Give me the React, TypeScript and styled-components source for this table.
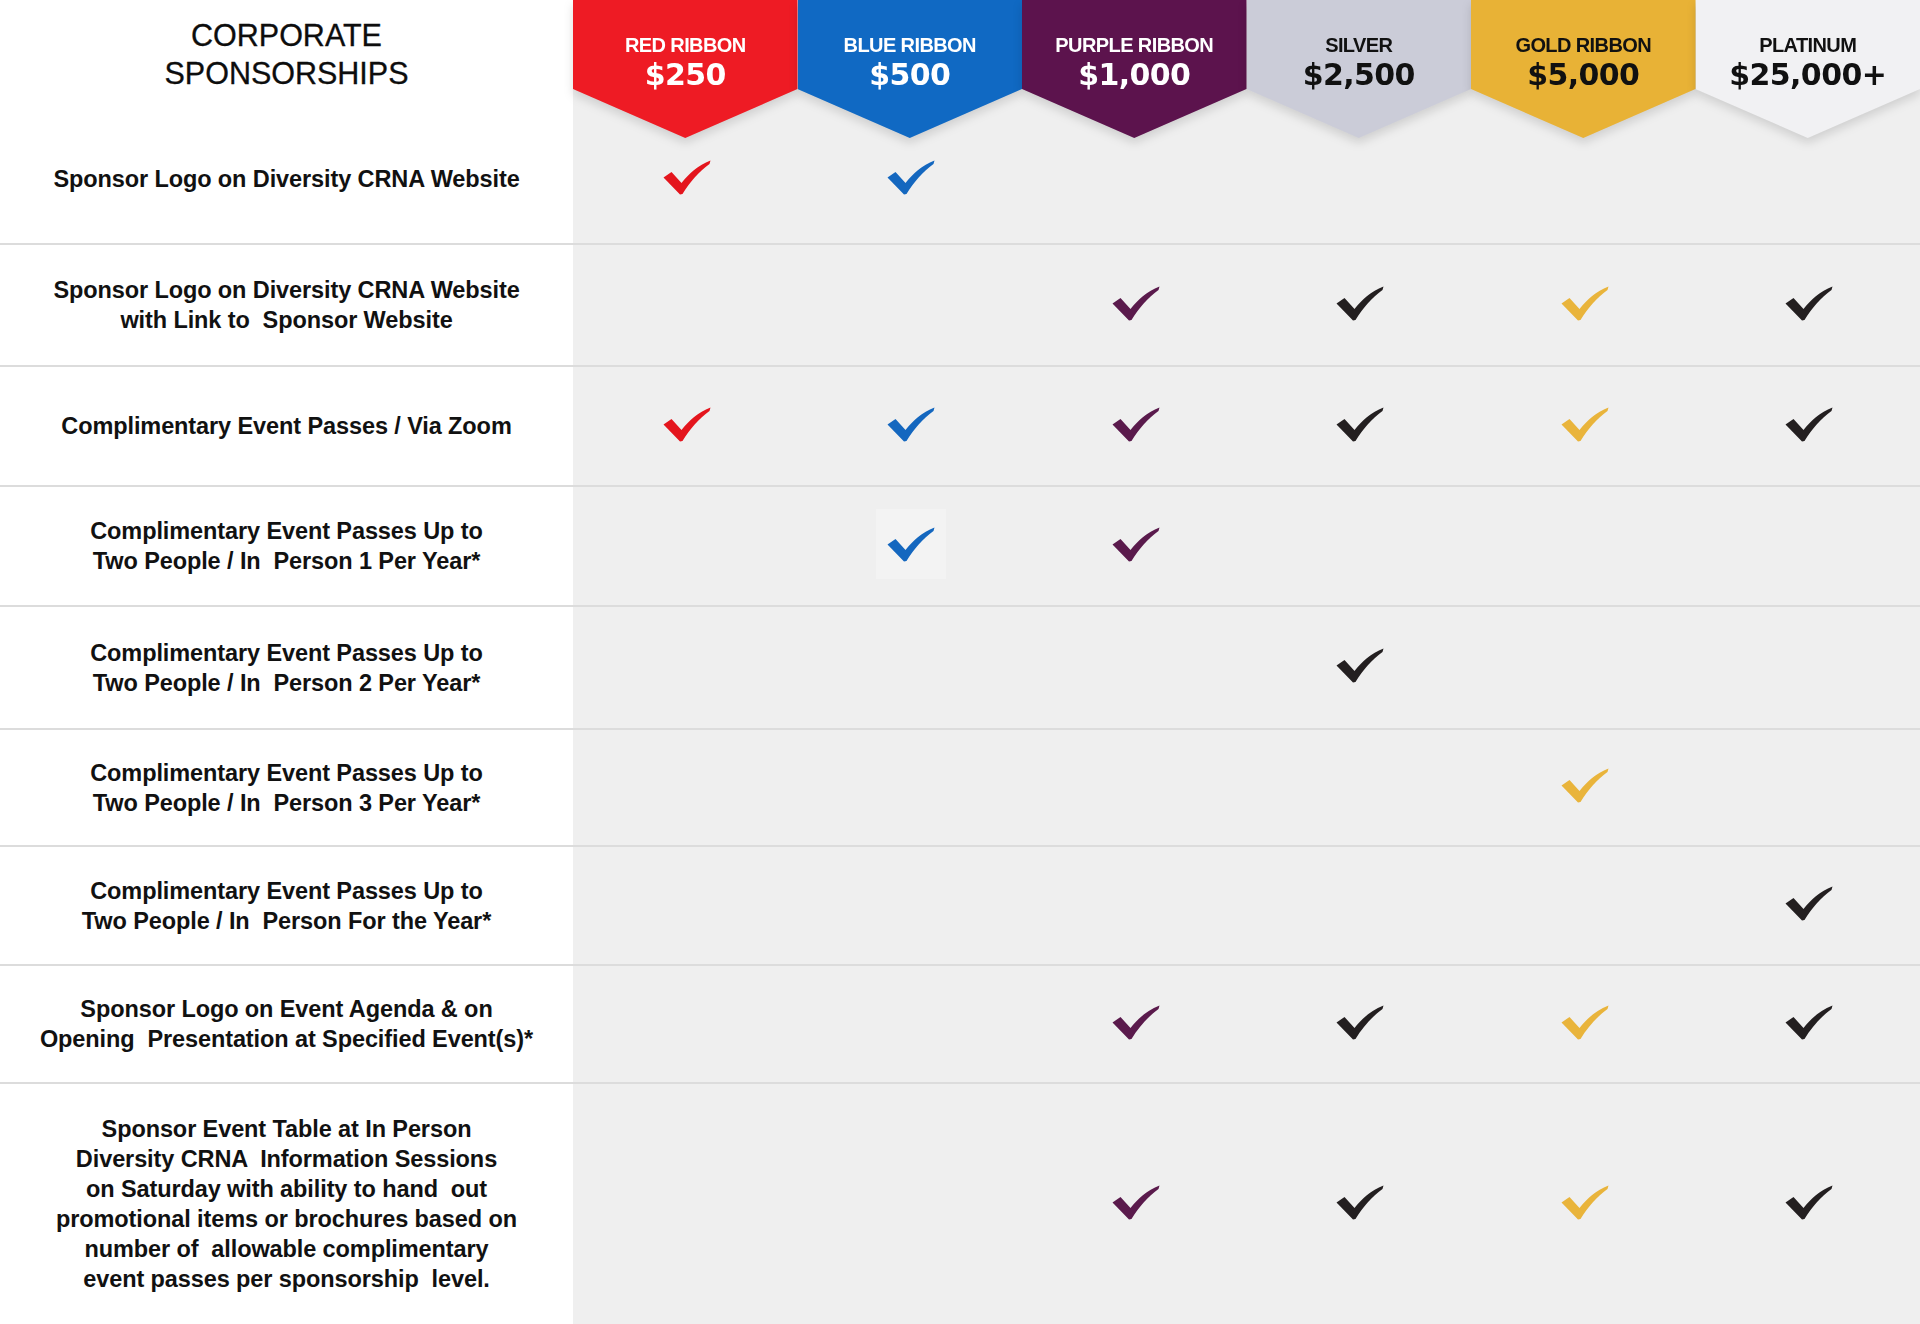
import React from "react";
import styled, { createGlobalStyle } from "styled-components";

type Tier = {
  name: string;
  price: string;
  color: string;
  ink: string;
  check: string;
};

const tiers: Tier[] = [
  { name: "RED RIBBON", price: "$250", color: "#ee1b24", ink: "#ffffff", check: "#e4151d" },
  { name: "BLUE RIBBON", price: "$500", color: "#1069c3", ink: "#ffffff", check: "#1467bf" },
  { name: "PURPLE RIBBON", price: "$1,000", color: "#5c134d", ink: "#ffffff", check: "#5a1a4c" },
  { name: "SILVER", price: "$2,500", color: "#cbccd8", ink: "#111111", check: "#231f20" },
  { name: "GOLD RIBBON", price: "$5,000", color: "#e8b236", ink: "#111111", check: "#e9b43b" },
  { name: "PLATINUM", price: "$25,000+", color: "#f1f1f3", ink: "#111111", check: "#231f20" },
];

type Benefit = {
  label: string;
  height: number;
  marks: number[];
  patch?: number;
};

const benefits: Benefit[] = [
  { label: "Sponsor Logo on Diversity CRNA Website", height: 130, marks: [1, 1, 0, 0, 0, 0] },
  {
    label: "Sponsor Logo on Diversity CRNA Website\nwith Link to  Sponsor Website",
    height: 122,
    marks: [0, 0, 1, 1, 1, 1],
  },
  { label: "Complimentary Event Passes / Via Zoom", height: 120, marks: [1, 1, 1, 1, 1, 1] },
  {
    label: "Complimentary Event Passes Up to\nTwo People / In  Person 1 Per Year*",
    height: 120,
    marks: [0, 1, 1, 0, 0, 0],
    patch: 1,
  },
  {
    label: "Complimentary Event Passes Up to\nTwo People / In  Person 2 Per Year*",
    height: 123,
    marks: [0, 0, 0, 1, 0, 0],
  },
  {
    label: "Complimentary Event Passes Up to\nTwo People / In  Person 3 Per Year*",
    height: 117,
    marks: [0, 0, 0, 0, 1, 0],
  },
  {
    label: "Complimentary Event Passes Up to\nTwo People / In  Person For the Year*",
    height: 119,
    marks: [0, 0, 0, 0, 0, 1],
  },
  {
    label: "Sponsor Logo on Event Agenda & on\nOpening  Presentation at Specified Event(s)*",
    height: 118,
    marks: [0, 0, 1, 1, 1, 1],
  },
  {
    label:
      "Sponsor Event Table at In Person\nDiversity CRNA  Information Sessions\non Saturday with ability to hand  out\npromotional items or brochures based on\nnumber of  allowable complimentary\nevent passes per sponsorship  level.",
    height: 240,
    marks: [0, 0, 1, 1, 1, 1],
  },
];

const Check = ({ color }: { color: string }) => (
  <svg width="48" height="35" viewBox="0 0 48 35">
    <path
      d="M0.5 17.5 L8.5 12 L18.5 23 C26 13.5 35 5.5 47.5 0.5 L46.5 4 C36 11.5 26.5 22.5 19.5 34 L17 34.5 Z"
      fill={color}
    />
  </svg>
);

const App = () => {
  return (
    <>
      <GlobalStyle />
      <Page>
        <HeaderRow>
          <TitleCell>
            CORPORATE
            <br />
            SPONSORSHIPS
          </TitleCell>
          {tiers.map((t) => (
            <RibbonCell key={t.name}>
              <RibbonShadow>
                <Ribbon $bg={t.color} $ink={t.ink}>
                  <RibbonName>{t.name}</RibbonName>
                  <RibbonPrice>{t.price}</RibbonPrice>
                </Ribbon>
              </RibbonShadow>
            </RibbonCell>
          ))}
        </HeaderRow>
        {benefits.map((b, i) => (
          <Row key={i} $height={b.height} $last={i === benefits.length - 1}>
            <LabelCell>{b.label}</LabelCell>
            {b.marks.map((m, j) => (
              <MarkCell key={j}>
                {m ? (
                  <Mark $patch={b.patch === j}>
                    <Check color={tiers[j].check} />
                  </Mark>
                ) : null}
              </MarkCell>
            ))}
          </Row>
        ))}
      </Page>
    </>
  );
};

const GlobalStyle = createGlobalStyle`
  html, body {
    margin: 0;
    padding: 0;
    background: #ffffff;
  }
  body {
    font-family: "Liberation Sans", Arial, sans-serif;
    color: #111111;
  }
`;

const Page = styled.div`
  width: 1920px;
  height: 1324px;
  overflow: hidden;
  background: #efefef;
`;

const Grid = styled.div`
  display: grid;
  grid-template-columns: 573px repeat(6, 1fr);
`;

const HeaderRow = styled(Grid)`
  height: 115px;
  position: relative;
  z-index: 2;
`;

const TitleCell = styled.div`
  background: #ffffff;
  padding-top: 16px;
  text-align: center;
  font-size: 30.5px;
  line-height: 38px;
  color: #0d0d0d;
  -webkit-text-stroke: 0.3px #0d0d0d;
`;

const RibbonCell = styled.div`
  background: #efefef;
  height: 115px;
`;

const RibbonShadow = styled.div`
  filter: drop-shadow(0 5px 5px rgba(0, 0, 0, 0.13));
`;

const Ribbon = styled.div<{ $bg: string; $ink: string }>`
  height: 138px;
  background: ${(p) => p.$bg};
  color: ${(p) => p.$ink};
  clip-path: polygon(0 0, 100% 0, 100% 64.5%, 50% 100%, 0 64.5%);
  display: flex;
  flex-direction: column;
  align-items: center;
  padding-top: 33px;
  box-sizing: border-box;
`;

const RibbonName = styled.div`
  font-size: 20px;
  line-height: 24px;
  font-weight: 700;
  letter-spacing: -0.6px;
`;

const RibbonPrice = styled.div`
  font-family: "DejaVu Sans", "Liberation Sans", sans-serif;
  font-size: 30px;
  line-height: 36px;
  font-weight: 700;
  letter-spacing: -0.6px;
`;

const Row = styled(Grid)<{ $height: number; $last?: boolean }>`
  height: ${(p) => p.$height}px;
  box-sizing: border-box;
  border-bottom: ${(p) => (p.$last ? "none" : "2px solid #dcdcdc")};
`;

const LabelCell = styled.div`
  background: #ffffff;
  display: flex;
  align-items: center;
  justify-content: center;
  text-align: center;
  white-space: pre-wrap;
  font-size: 23.5px;
  line-height: 30px;
  font-weight: 700;
  letter-spacing: -0.1px;
  color: #111111;
`;

const MarkCell = styled.div`
  display: flex;
  align-items: center;
  justify-content: center;
`;

const Mark = styled.div<{ $patch?: boolean }>`
  width: 70px;
  height: 70px;
  margin: 0 0 4px 3px;
  display: flex;
  align-items: center;
  justify-content: center;
  background: ${(p) => (p.$patch ? "#f3f3f3" : "transparent")};
`;

export default App;
